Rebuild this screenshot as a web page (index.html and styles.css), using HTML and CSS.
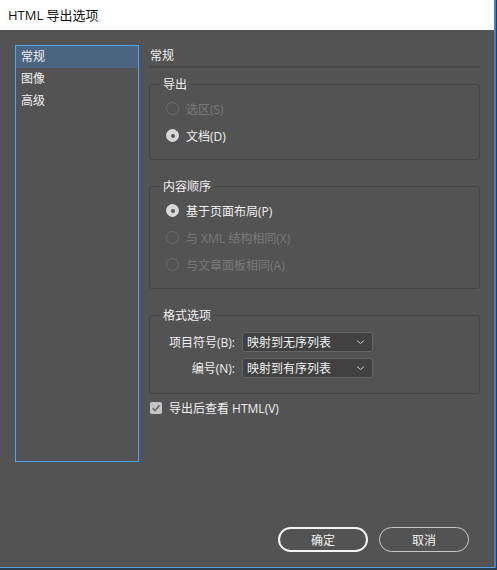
FILE: index.html
```html
<!DOCTYPE html>
<html lang="zh-CN">
<head>
    <meta charset="UTF-8">
    <meta name="viewport" content="width=device-width, initial-scale=1.0">
    <title>HTML 导出选项</title>
    <link rel="stylesheet" href="styles.css">
</head>
<body>
    <div class="window">
        <div class="titlebar">HTML 导出选项</div>
        <div class="dialog">
            <div class="main">
                <ul class="sections">
                    <li class="selected">常规</li>
                    <li>图像</li>
                    <li>高级</li>
                </ul>
                <div class="panel">
                    <div class="panel-title">常规</div>

                    <fieldset class="group">
                        <legend>导出</legend>
                        <div class="options">
                            <label class="radio disabled"><span class="dot"></span>选区(S)</label>
                            <label class="radio checked"><span class="dot"></span>文档(D)</label>
                        </div>
                    </fieldset>

                    <fieldset class="group">
                        <legend>内容顺序</legend>
                        <div class="options">
                            <label class="radio checked"><span class="dot"></span>基于页面布局(P)</label>
                            <label class="radio disabled"><span class="dot"></span>与 XML 结构相同(X)</label>
                            <label class="radio disabled"><span class="dot"></span>与文章面板相同(A)</label>
                        </div>
                    </fieldset>

                    <fieldset class="group">
                        <legend>格式选项</legend>
                        <div class="format-rows">
                            <span class="field-label">项目符号(B):</span>
                            <div class="select">映射到无序列表
                                <svg width="9" height="6" viewBox="0 0 9 6"><path d="M1 1.5 L4.5 4.5 L8 1.5" fill="none" stroke="#cfcfcf" stroke-width="1"/></svg>
                            </div>
                            <span class="field-label">编号(N):</span>
                            <div class="select">映射到有序列表
                                <svg width="9" height="6" viewBox="0 0 9 6"><path d="M1 1.5 L4.5 4.5 L8 1.5" fill="none" stroke="#cfcfcf" stroke-width="1"/></svg>
                            </div>
                        </div>
                    </fieldset>

                    <label class="checkbox">
                        <span class="box">
                            <svg width="10" height="10" viewBox="0 0 10 10"><path d="M1.5 5.2 L4 7.6 L8.6 2.4" fill="none" stroke="#6e6e6e" stroke-width="1.6"/></svg>
                        </span>
                        导出后查看 HTML(V)
                    </label>
                </div>
            </div>
            <div class="actions">
                <button class="btn default">确定</button>
                <button class="btn">取消</button>
            </div>
        </div>
    </div>
</body>
</html>
```

FILE: styles.css
```css
html {
    background: #2d3b4b;
}

body {
    margin: 0;
    padding: 0;
    font-family: "Open Sans", "Noto Sans CJK SC", sans-serif;
    font-size: 12px;
    color: #f0f0f0;
}

.window {
    width: 494px;
    height: 567px;
    display: flex;
    flex-direction: column;
    background: #535353;
    border-right: 2px solid #2f86d8;
    border-bottom: 1px solid #5aa2e6;
}

.titlebar {
    height: 30px;
    line-height: 30px;
    padding-left: 8px;
    background: #ffffff;
    color: #111;
    font-size: 13px;
}

.dialog {
    flex: 1;
    display: flex;
    flex-direction: column;
    padding: 15px 25px 15px 15px;
}

.main {
    display: flex;
    gap: 10px;
}

/* section list on the left */
.sections {
    width: 122px;
    height: 415px;
    margin: 0;
    padding: 0;
    list-style: none;
    border: 1px solid #44a6ff;
}

.sections li {
    height: 22px;
    line-height: 22px;
    padding-left: 5px;
}

.sections li.selected {
    background: #4b6581;
}

.panel {
    flex: 1;
    margin-right: -11px;
}

.panel-title {
    height: 21px;
    line-height: 22px;
    padding-left: 1px;
    border-bottom: 2px solid #474747;
}

.group {
    margin: 8px 0 0;
    padding: 0;
    border: 1px solid #444444;
    border-radius: 3px;
}

.group + .group {
    margin-top: 18px;
}

.group legend {
    margin-left: 10px;
    padding: 0 3px;
    line-height: 17px;
}

.options {
    padding: 2px 16px 10px;
}

.radio {
    display: flex;
    align-items: center;
    height: 27px;
}

.radio .dot {
    width: 11px;
    height: 11px;
    margin-right: 7px;
    border-radius: 50%;
    border: 1px solid #6c6c6c;
    box-sizing: content-box;
}

.radio.checked .dot {
    background: #d7d7d7;
    border-color: #d7d7d7;
    position: relative;
}

.radio.checked .dot::after {
    content: "";
    position: absolute;
    left: 3.5px;
    top: 3.5px;
    width: 4px;
    height: 4px;
    border-radius: 50%;
    background: #555;
}

.radio.disabled {
    color: #7a7a7a;
}

.format-rows {
    display: grid;
    grid-template-columns: 69px 131px;
    column-gap: 7px;
    row-gap: 6px;
    align-items: center;
    padding: 8px 16px 15px;
}

.field-label {
    text-align: right;
    white-space: nowrap;
}

.select {
    display: flex;
    align-items: center;
    justify-content: space-between;
    height: 18px;
    padding: 0 7px 0 4px;
    background: #414141;
    border: 1px solid #666666;
    border-radius: 3px;
}

.checkbox {
    display: flex;
    align-items: center;
    gap: 7px;
    margin-top: 5px;
    padding-left: 1px;
    height: 17px;
}

.checkbox .box {
    width: 12px;
    height: 12px;
    display: flex;
    align-items: center;
    justify-content: center;
    background: #c4c4c4;
    border-radius: 2px;
}

.actions {
    margin-top: auto;
    display: flex;
    justify-content: flex-end;
    gap: 11px;
}

.btn {
    width: 90px;
    height: 25px;
    padding: 0;
    font-family: inherit;
    font-size: 12px;
    color: #f2f2f2;
    background: transparent;
    border: 1px solid #c9c9c9;
    border-radius: 13px;
}

.btn.default {
    border: 2px solid #f4f4f4;
}
```
